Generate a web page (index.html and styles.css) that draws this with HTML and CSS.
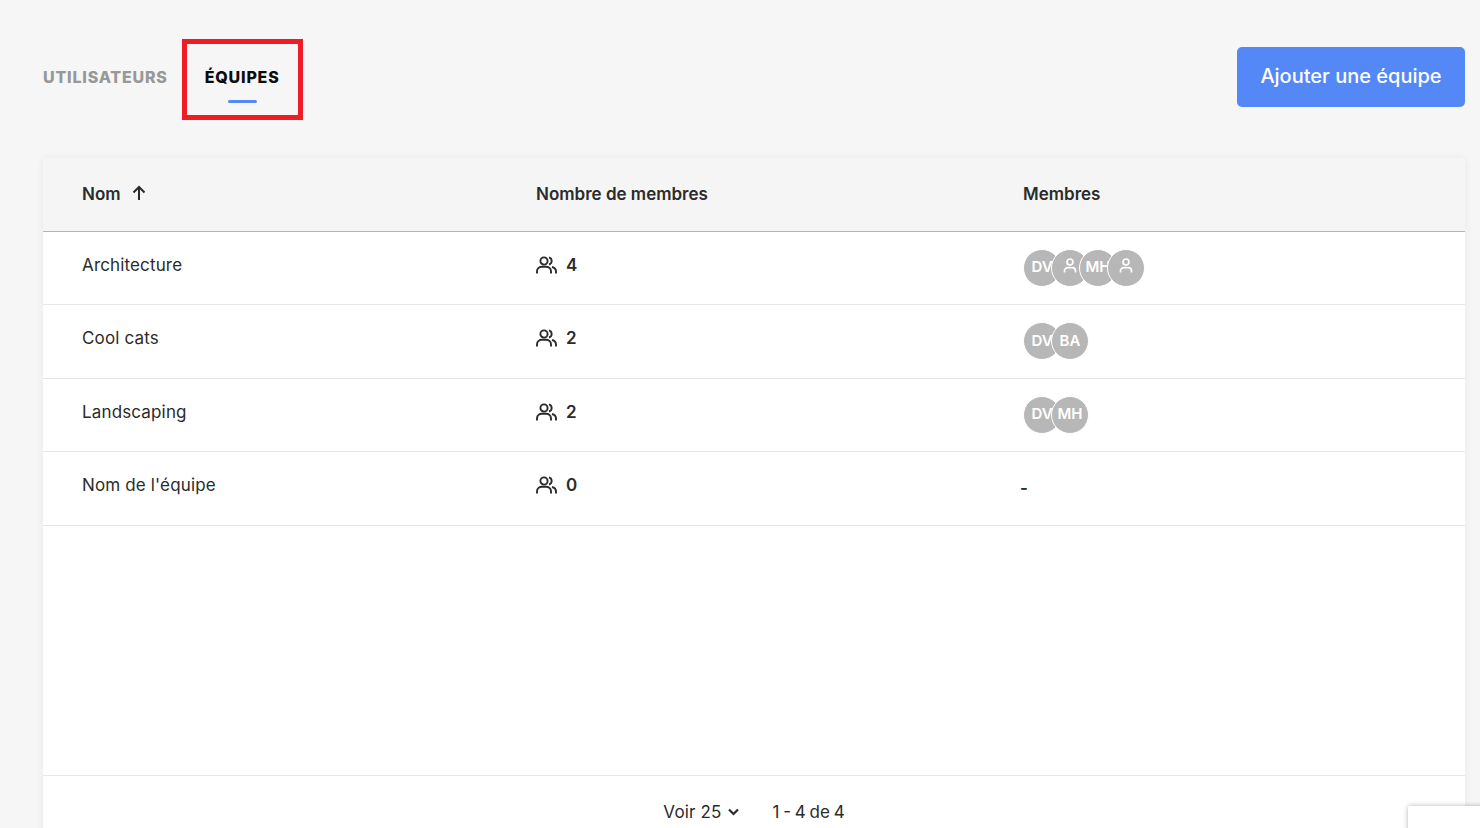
FILE: index.html
```html
<!DOCTYPE html>
<html lang="fr">
<head>
<meta charset="utf-8">
<title>Équipes</title>
<link rel="stylesheet" href="styles.css">
</head>
<body>
<svg class="defs" width="0" height="0" aria-hidden="true">
  <symbol id="people" viewBox="0 0 21 18">
    <circle cx="8" cy="5" r="3.600"/>
    <path d="M1 17.500v-2C1 12.500 3.500 10.800 6 10.800h4c2.500 0 5 1.700 5 4.700v2"/>
    <path d="M13 1.400a3.700 3.700 0 0 1 0 7.100"/>
    <path d="M16 11c2.200.6 4 2.200 4 4.500v2"/>
  </symbol>
  <symbol id="person" viewBox="0 0 14 15">
    <circle cx="7" cy="4" r="3"/>
    <path d="M1.500 14.500v-1.500c0-2 1.500-3.300 3.500-3.300h4c2 0 3.500 1.300 3.500 3.300v1.500"/>
  </symbol>
</svg>
<main class="page">
  <header class="top">
    <nav class="tabs">
      <a class="tab">UTILISATEURS</a>
      <a class="tab tab-active">ÉQUIPES</a>
    </nav>
    <button class="primary">Ajouter une équipe</button>
  </header>
  <section class="card">
    <div class="row head">
      <div class="cell">Nom <svg class="arrow" viewBox="0 0 14 16"><path d="M7 15V2M1.500 7.500 7 2l5.500 5.500"/></svg></div>
      <div class="cell">Nombre de membres</div>
      <div class="cell">Membres</div>
    </div>
    <div class="row">
      <div class="cell">Architecture</div>
      <div class="cell count"><svg class="people"><use href="#people"/></svg><b>4</b></div>
      <div class="cell avatars">
        <span class="avatar">DV</span>
        <span class="avatar"><svg class="person"><use href="#person"/></svg></span>
        <span class="avatar">MH</span>
        <span class="avatar"><svg class="person"><use href="#person"/></svg></span>
      </div>
    </div>
    <div class="row">
      <div class="cell">Cool cats</div>
      <div class="cell count"><svg class="people"><use href="#people"/></svg><b>2</b></div>
      <div class="cell avatars"><span class="avatar">DV</span><span class="avatar">BA</span></div>
    </div>
    <div class="row">
      <div class="cell">Landscaping</div>
      <div class="cell count"><svg class="people"><use href="#people"/></svg><b>2</b></div>
      <div class="cell avatars"><span class="avatar">DV</span><span class="avatar">MH</span></div>
    </div>
    <div class="row">
      <div class="cell">Nom de l'équipe</div>
      <div class="cell count"><svg class="people"><use href="#people"/></svg><b>0</b></div>
      <div class="cell dash">-</div>
    </div>
    <div class="spacer"></div>
    <footer class="pager">
      <span class="per-page">Voir 25 <svg class="chev" viewBox="0 0 11 8"><path d="M1 1.500 5.500 6 10 1.500"/></svg></span>
      <span class="range">1 - 4 de 4</span>
    </footer>
  </section>
</main>
<div class="highlight"></div>
<div class="corner"></div>
</body>
</html>
```
FILE: styles.css
```css
* { box-sizing: border-box; }
html, body { margin: 0; height: 100%; overflow: hidden; }
body {
  background: #f6f6f6;
  color: #2b2b2b;
  font-family: "Inter", "Liberation Sans", sans-serif;
  font-size: 17px;
}
.defs { position: absolute; }
.page { padding: 47px 15px 0 43px; }
.top { display: flex; justify-content: space-between; align-items: flex-start; }
.tabs { display: flex; gap: 37px; padding-top: 20px; }
.tab {
  position: relative;
  font-weight: 800;
  font-size: 16px;
  letter-spacing: .8px;
  line-height: 20px;
  color: #989898;
}
.tab-active { color: #0c0c0c; }
.tab-active::after {
  content: "";
  position: absolute;
  left: 50%;
  bottom: -16px;
  width: 29px;
  height: 3px;
  margin-left: -14.500px;
  background: #5488f7;
  border-radius: 2px;
}
.primary {
  width: 228px;
  height: 60px;
  padding-bottom: 3px;
  border: 0;
  border-radius: 5px;
  background: #5488f7;
  color: #fff;
  font: 500 20px "Inter", "Liberation Sans", sans-serif;
}
.card {
  margin-top: 51px;
  height: 700px;
  background: #fff;
  border-radius: 4px;
  box-shadow: 0 0 8px rgba(0, 0, 0, .06);
  display: flex;
  flex-direction: column;
}
.row {
  display: grid;
  grid-template-columns: 454px 487px 1fr;
  height: 73.500px;
  flex: none;
  padding-left: 39px;
  border-bottom: 1px solid #e6e6e6;
  align-items: center;
  letter-spacing: .15px;
}
.head {
  height: 73.600px;
  background: #f5f5f5;
  border-bottom-color: #b4b4b4;
  font-weight: 600;
  letter-spacing: 0;
  border-radius: 4px 4px 0 0;
}
.cell { display: flex; align-items: center; padding-bottom: 6px; }
.head .cell { padding-bottom: 1px; padding-top: 0; }
.arrow {
  width: 14px;
  height: 16px;
  margin: -2px 0 0 11px;
  fill: none;
  stroke: #2b2b2b;
  stroke-width: 2;
}
.count { gap: 9px; }
.count b { font-weight: 600; }
.people {
  width: 21px;
  height: 18px;
  fill: none;
  stroke: #2b2b2b;
  stroke-width: 1.900;
}
.avatars { padding: 0; }
.avatar {
  width: 38px;
  height: 38px;
  flex: none;
  margin-right: -10px;
  padding-bottom: 2px;
  border-radius: 50%;
  border: 1px solid #fff;
  background: #b7b7b7;
  color: #fff;
  font-size: 15px;
  font-weight: 600;
  letter-spacing: 0;
  display: flex;
  align-items: center;
  justify-content: center;
  overflow: hidden;
  position: relative;
}
.person {
  width: 14px;
  height: 15px;
  margin-top: -2px;
  fill: none;
  stroke: #fff;
  stroke-width: 1.700;
}
.dash { padding: 0; margin: 0 0 0 -3px; font-weight: 600; }
.spacer { flex: 1; }
.pager {
  height: 83px;
  flex: none;
  padding: 26px 0 0 0;
  border-top: 1px solid #e6e6e6;
  display: flex;
  justify-content: center;
  gap: 33px;
  line-height: 20px;
}
.per-page { display: flex; align-items: center; gap: 7px; height: 20px; letter-spacing: .15px; }
.range { word-spacing: -1px; }
.chev {
  width: 11px;
  height: 8px;
  fill: none;
  stroke: #2b2b2b;
  stroke-width: 2.200;
}
.highlight {
  position: absolute;
  left: 182px;
  top: 39px;
  width: 121px;
  height: 81px;
  border: 5px solid #ee1c25;
}
.corner {
  position: fixed;
  left: 1408px;
  top: 806px;
  width: 100px;
  height: 60px;
  background: #fff;
  border-radius: 2px;
  box-shadow: 0 0 5px rgba(0, 0, 0, .3);
}
```
